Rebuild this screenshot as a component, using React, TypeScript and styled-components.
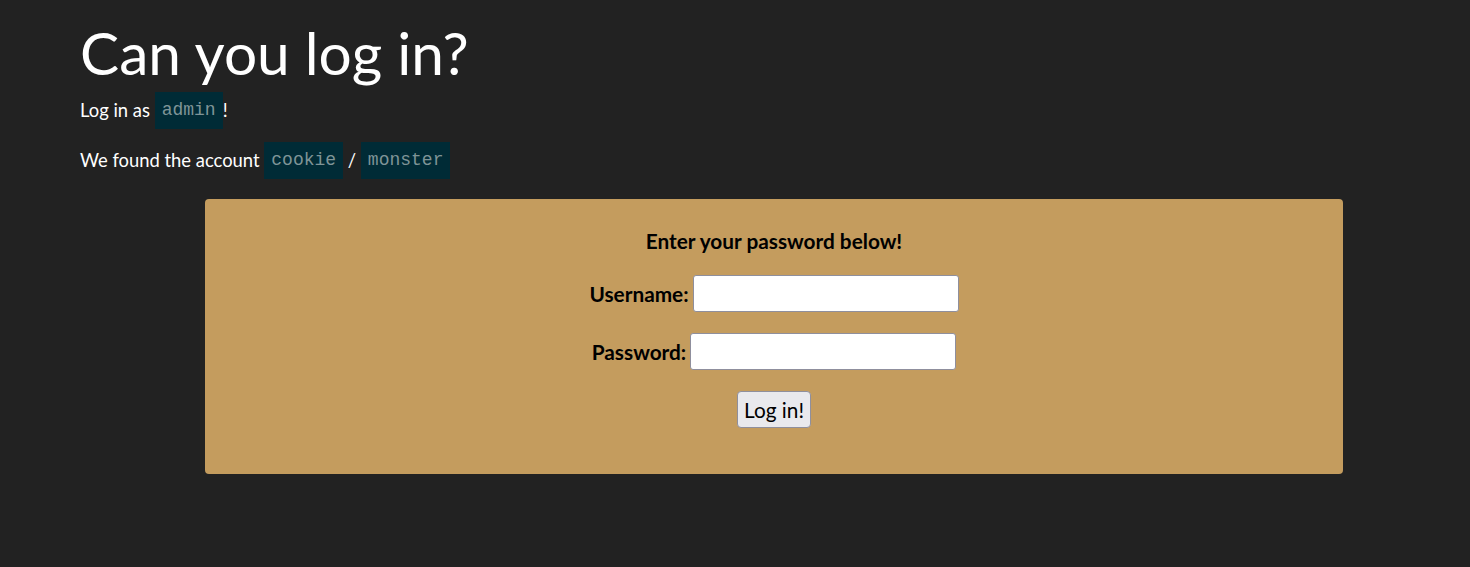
import React, { FC } from 'react';
import styled, { createGlobalStyle } from 'styled-components';

const GlobalStyle = createGlobalStyle`
    html, body {
        margin: 0;
        background: #222222;
        color: #ffffff;
        font-family: Lato, "Open Sans", sans-serif;
    }
`;

const Page = styled.main`
    padding: 15px 80px 40px;
`;

const Title = styled.h1`
    margin: 0 0 3px;
    font-size: 58.6px;
    font-weight: 400;
    line-height: 74px;
`;

const Line = styled.p`
    margin: 0 0 13px;
    font-size: 18.4px;
    line-height: 37px;
    display: flex;
    align-items: center;
    white-space: pre;
`;

const Code = styled.code`
    display: inline-block;
    background: #002b36;
    color: #7f9497;
    font-family: "Liberation Mono", "DejaVu Sans Mono", monospace;
    font-size: 18px;
    line-height: 37px;
    padding: 0 7px;
`;

const Panel = styled.form`
    margin: 20px 0 0 125px;
    width: 1138px;
    box-sizing: border-box;
    background: #c49c5e;
    border-radius: 4px;
    color: #000000;
    padding: 28px 0 46px;
    display: flex;
    flex-direction: column;
    align-items: center;
`;

const Heading = styled.div`
    font-size: 20.8px;
    font-weight: 700;
    line-height: 28px;
    margin-bottom: 20px;
`;

const Field = styled.label`
    display: flex;
    align-items: center;
    gap: 4px;
    font-size: 20.8px;
    font-weight: 700;
    margin-bottom: 21px;
`;

const Input = styled.input`
    width: 266px;
    height: 37px;
    box-sizing: border-box;
    border: 1px solid #8f8f9d;
    border-radius: 3px;
    background: #ffffff;
    font-family: inherit;
    font-size: 18px;
    padding: 2px 6px;
`;

const Button = styled.button`
    height: 37px;
    padding: 0 6px;
    box-sizing: border-box;
    background: #e9e9ed;
    border: 1px solid #8f8f9d;
    border-radius: 4px;
    font-family: Lato, sans-serif;
    font-size: 20.8px;
    color: #000000;
`;

const App: FC = () => {
    return (
        <>
            <GlobalStyle/>
            <Page>
                <Title>Can you log in?</Title>
                <Line>Log in as <Code>admin</Code>!</Line>
                <Line>We found the account <Code>cookie</Code> / <Code>monster</Code></Line>
                <Panel onSubmit={e => e.preventDefault()}>
                    <Heading>Enter your password below!</Heading>
                    <Field>Username: <Input type="text"/></Field>
                    <Field>Password: <Input type="password"/></Field>
                    <Button type="submit">Log in!</Button>
                </Panel>
            </Page>
        </>
    );
};

export default App;
